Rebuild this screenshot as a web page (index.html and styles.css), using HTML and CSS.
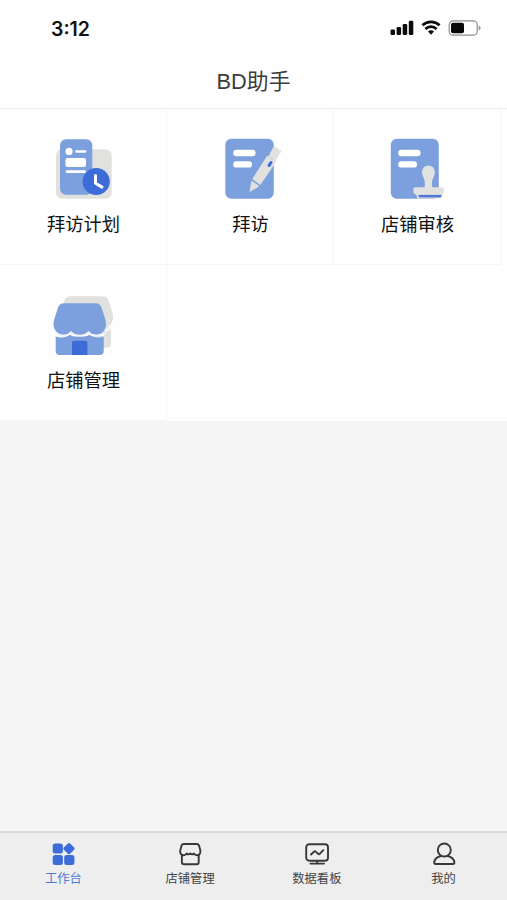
FILE: index.html
```html
<!DOCTYPE html>
<html lang="zh-CN">
<head>
<meta charset="utf-8">
<title>BD助手</title>
<link rel="stylesheet" href="styles.css">
</head>
<body>
<div class="app">
  <div class="status">
    <span class="time">3:12</span>
    <svg class="signals" width="92" height="18" viewBox="0 0 92 18">
      <g fill="#0b0b0b">
        <rect x="0.500" y="10.500" width="4.500" height="5.500" rx="1.200"/>
        <rect x="6.600" y="8" width="4.500" height="8" rx="1.200"/>
        <rect x="12.700" y="5" width="4.500" height="11" rx="1.200"/>
        <rect x="18.800" y="1.700" width="4.500" height="14.300" rx="1.200"/>
        <path d="M41 15.800l-3-3.200a4.600 4.600 0 0 1 6 0z"/>
      </g>
      <path d="M32.400 6.300a12.500 12.500 0 0 1 17.200 0M35.400 9.900a8.200 8.200 0 0 1 11.200 0" fill="none" stroke="#0b0b0b" stroke-width="2.700"/>
      <rect x="59.200" y="1.900" width="28" height="14.300" rx="4" fill="#fff" stroke="#8f8f8f" stroke-width="1.200"/>
      <rect x="61" y="3.800" width="13" height="10.400" rx="2" fill="#080808"/>
      <path d="M88.600 6.200q4.200 2.800 0 5.600z" fill="#999"/>
    </svg>
  </div>
  <header class="title">BD助手</header>
  <main class="grid">
    <a class="card">
      <svg width="64" height="64" viewBox="0 0 64 64">
        <rect x="5" y="13.300" width="55.700" height="49.500" rx="6" fill="#e1e1df"/>
        <rect x="9" y="3.300" width="32.300" height="55.500" rx="6" fill="#7ba0dd"/>
        <circle cx="18" cy="15.400" r="3.600" fill="#fff"/>
        <path d="M25.500 15.500h8.600M16 35.600h17.800" stroke="#fff" stroke-width="2.700" stroke-linecap="round"/>
        <rect x="14.500" y="22" width="20.500" height="9" rx="2" fill="#fff"/>
        <circle cx="45.200" cy="45.500" r="13.600" fill="#3d6bd8"/>
        <path d="M44.500 39.500v7.800l6.500 3.800" fill="none" stroke="#fff" stroke-width="3" stroke-linecap="round" stroke-linejoin="round"/>
      </svg>
      <span>拜访计划</span>
    </a>
    <a class="card">
      <svg width="64" height="64" viewBox="0 0 64 64">
        <rect x="7.300" y="2.800" width="48.500" height="60" rx="6" fill="#7ba0dd"/>
        <path d="M18.400 17h16M18.400 28.400h12.400" stroke="#fff" stroke-width="6.400" stroke-linecap="round"/>
        <g fill="#e1e1df" stroke="#e1e1df" stroke-linejoin="round">
          <path d="M31.900 55.300l2-10 6.800 4.900z"/>
          <path d="M34.800 43L49.300 20.300l8.200 5.600L42.300 48.400z"/>
          <path d="M52.800 17.400l3.700-6.200 5.700 4.300-4 6z" stroke-width="2"/>
          <path d="M50.500 20l7 4.800 1-3.300-5-3.500z"/>
        </g>
        <path d="M53 26.500l-1.900 2.900" stroke="#3d6bd8" stroke-width="3" stroke-linecap="round"/>
      </svg>
      <span>拜访</span>
    </a>
    <a class="card">
      <svg width="64" height="64" viewBox="0 0 64 64">
        <rect x="5.800" y="2.800" width="48" height="60" rx="6" fill="#7ba0dd"/>
        <path d="M16.400 17h16M16.400 28.400h12.400" stroke="#fff" stroke-width="6.400" stroke-linecap="round"/>
        <path d="M31 57.500h26.500l-1.500 5H32.500z" fill="#e9eaea"/>
        <path d="M33 58.700h24l-1.300 2.700H34.300z" fill="#4f78d4"/>
        <path d="M39.800 51.300v-5.800c0-2.200-2.800-5.800-2.800-9.600a6.400 6.400 0 0 1 12.900 0c0 3.800-2.800 7.400-2.800 9.600v5.800h10q1.900 0 1.900 1.900v1.800q0 3.500-3.500 3.500H31.800q-3.500 0-3.500-3.500v-1.800q0-1.900 1.900-1.900z" fill="#e1e1df"/>
      </svg>
      <span>店铺审核</span>
    </a>
    <a class="card">
      <svg width="64" height="64" viewBox="0 0 64 64">
        <path d="M20 4.200h31.500q4.500 0 6 4.300l4.200 13c1.500 6-1.200 11-4.500 13V37H60v14.500q0 4.200-4.200 4.200H17L13 9q2-4.800 7-4.800z" fill="#e1e1df"/>
        <path d="M54 36.500l6-1.500v2l-6 4z" fill="#f4f4f4"/>
        <path d="M4.700 42h48v2h-48z" fill="#fff"/>
        <path d="M4.700 44.400c5.500 2 10.300 1 14-1.700q5.500 3.300 10 1 4.500 2.300 10-1c3.700 2.700 8.500 3.700 14 1.700V59q0 4-4 4h-40q-4 0-4-4z" fill="#7ba0dd"/>
        <path d="M21 63V51q0-2.200 2.200-2.200h11q2.200 0 2.200 2.200v12z" fill="#3d6bd8"/>
        <path d="M13 11.300h31.500q4.500 0 6 4.300L54.500 28C57 37 50.500 43 44.500 43q-4.300 0-7-3.200-3.500 3.700-8.800 3.200-5.200.5-8.700-3.200-2.700 3.200-7 3.200C7 43 .5 37 3 28L7 15.600q1.500-4.300 6-4.300z" fill="#7ba0dd"/>
        <path d="M4 41q4.500 3 9 2.600 4.300 0 7-3.200 3.500 3.700 8.700 3.200 5.300.5 8.800-3.200 2.700 3.200 7 3.200 4.500.4 9.500-2.600" fill="none" stroke="#f2f4f8" stroke-width="2"/>
      </svg>
      <span>店铺管理</span>
    </a>
  </main>
  <nav class="tabs">
    <a class="tab active">
      <svg width="26" height="26" viewBox="0 0 26 26" fill="#3d6bd8">
        <rect x="2.700" y="2.500" width="10.200" height="10" rx="2.500"/>
        <rect x="14.600" y="3.200" width="8.800" height="8.800" rx="1.500" transform="rotate(45 19 7.600)"/>
        <rect x="2.700" y="14" width="10.200" height="10" rx="2.500"/>
        <rect x="14.200" y="14" width="10.200" height="10" rx="2.500"/>
      </svg>
      <span>工作台</span>
    </a>
    <a class="tab">
      <svg class="line" width="26" height="26" viewBox="0 0 26 26">
        <path d="M6.800 3h13q1.700 0 2.200 1.600l1.300 4.600c.8 3-1 5-3.200 5q-2.200 0-3.300-1.700-1.600 1.800-3.500 0-1.900 1.800-3.500 0Q8.700 14.200 6.500 14.200c-2.200 0-4-2-3.200-5l1.300-4.600Q5.100 3 6.800 3z"/>
        <path d="M4.900 14v7.200q0 2 2 2h12.800q2 0 2-2V14"/>
      </svg>
      <span>店铺管理</span>
    </a>
    <a class="tab">
      <svg class="line" width="26" height="26" viewBox="0 0 26 26">
        <rect x="2.200" y="3.300" width="21.800" height="16.500" rx="3"/>
        <path d="M7 13.500l3-2.800q1-.8 2 .2l2 1.800q1 .9 2-.1l3.300-3.400M6.500 22.600h13.500M13.200 20v2.500"/>
      </svg>
      <span>数据看板</span>
    </a>
    <a class="tab">
      <svg class="line" width="26" height="26" viewBox="0 0 26 26">
        <circle cx="13.300" cy="9" r="6.500"/>
        <path d="M10 15C6 15.700 3.600 18.500 3.200 21.500q-.1 1.500 1.400 1.500h17.400q1.500 0 1.400-1.500c-.4-3-2.800-5.800-6.800-6.500"/>
      </svg>
      <span>我的</span>
    </a>
  </nav>
</div>
</body>
</html>
```
FILE: styles.css
```css
* { box-sizing: border-box; }
body {
  margin: 0;
  background: #f5f5f5;
  color: #111;
  font-family: Inter, "Noto Sans CJK SC", sans-serif;
}
.app {
  height: 900px;
  display: flex;
  flex-direction: column;
}
.status {
  height: 54px;
  padding: 19px 25px 0 51px;
  display: flex;
  justify-content: space-between;
  align-items: flex-start;
  background: #fefefe;
}
.time {
  font-size: 19.5px;
  line-height: 21px;
  font-weight: 600;
}
.title {
  height: 55px;
  border-bottom: 1px solid #efefef;
  background: #fefefe;
  color: #3c3c3c;
  font-family: "Liberation Sans", "Noto Sans CJK SC", sans-serif;
  font-size: 21.8px;
  line-height: 56px;
  text-align: center;
}
.grid {
  display: grid;
  grid-template-columns: repeat(3, 167px);
  grid-auto-rows: 156px;
  background: #fefefe;
}
.card {
  display: flex;
  flex-direction: column;
  align-items: center;
  padding-top: 27px;
  border-right: 1px solid #f5f5f5;
  border-bottom: 1px solid #f5f5f5;
}
.card span {
  margin: 10px 0 0 1px;
  font-size: 18.3px;
  line-height: 28px;
}
.tabs {
  height: 69px;
  margin-top: auto;
  display: grid;
  grid-template-columns: repeat(4, 1fr);
  border-top: 2px solid #dcdcdc;
  background: #eee;
}
.tab {
  display: flex;
  flex-direction: column;
  align-items: center;
  padding-top: 8px;
  color: #444;
  font-size: 12.3px;
  line-height: 18px;
}
.tab span { margin-top: 3px; }
.active { color: #5078d6; }
.line {
  fill: none;
  stroke: #383838;
  stroke-width: 1.9;
  stroke-linecap: round;
  stroke-linejoin: round;
}
```
